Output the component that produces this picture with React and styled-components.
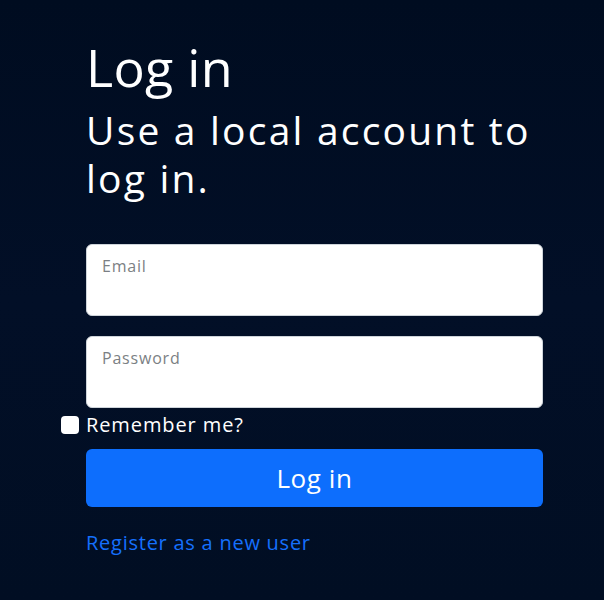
import styled, { createGlobalStyle } from 'styled-components'

const GlobalStyle = createGlobalStyle`
  html, body {
    margin: 0;
    padding: 0;
    background: #010e24;
  }
  body {
    font-family: "Open Sans", "Noto Sans", sans-serif;
    color: #ffffff;
  }
`

const Page = styled.div`
  min-height: 600px;
  background: linear-gradient(180deg, #000c20 0%, #020f27 50%, #010e23 100%);
  padding: 36px 0 0 86px;
  box-sizing: border-box;
`

const Column = styled.div`
  width: 457px;
  display: flex;
  flex-direction: column;
`

const Title = styled.h1`
  margin: 0;
  font-weight: 400;
  font-size: 52px;
  line-height: 62px;
  letter-spacing: 0.3px;
`

const SubTitle = styled.h2`
  margin: 8px 0 0;
  font-weight: 400;
  font-size: 39px;
  line-height: 48px;
  letter-spacing: 2.2px;
`

const Form = styled.form`
  margin-top: 42px;
  display: flex;
  flex-direction: column;
`

const Field = styled.label`
  display: block;
  position: relative;
  height: 72px;
  box-sizing: border-box;
  background: #ffffff;
  border: 1px solid #ced4da;
  border-radius: 6px;
  margin-bottom: ${({ last }) => (last ? '7px' : '20px')};
`

const FloatLabel = styled.span`
  position: absolute;
  left: 15px;
  top: 10px;
  font-size: 16px;
  line-height: 22px;
  letter-spacing: 0.8px;
  color: #7b7f84;
`

const Input = styled.input`
  position: absolute;
  left: 16px;
  right: 16px;
  bottom: 10px;
  border: 0;
  outline: none;
  background: transparent;
  font-family: inherit;
  font-size: 16px;
`

const CheckRow = styled.div`
  display: flex;
  align-items: center;
  gap: 7px;
  margin-left: -25px;
  height: 20px;
`

const Box = styled.span`
  width: 18px;
  height: 18px;
  box-sizing: border-box;
  background: #ffffff;
  border-radius: 4px;
  flex-shrink: 0;
`

const CheckText = styled.span`
  font-size: 20px;
  line-height: 20px;
  letter-spacing: 0.9px;
  color: #ffffff;
`

const Button = styled.button`
  margin-top: 14px;
  height: 58px;
  border: 0;
  border-radius: 6px;
  background: #0d6efd;
  color: #ffffff;
  font-family: inherit;
  font-size: 26px;
  letter-spacing: 0.6px;
  cursor: pointer;
`

const RegisterLink = styled.a`
  margin-top: 23px;
  font-size: 20px;
  line-height: 26px;
  letter-spacing: 0.75px;
  color: #1570fd;
  text-decoration: none;
`

export default function App() {
  return (
    <>
      <GlobalStyle />
      <Page>
        <Column>
          <Title>Log in</Title>
          <SubTitle>Use a local account to log in.</SubTitle>
          <Form onSubmit={(e) => e.preventDefault()}>
            <Field>
              <FloatLabel>Email</FloatLabel>
              <Input type="email" />
            </Field>
            <Field last>
              <FloatLabel>Password</FloatLabel>
              <Input type="password" />
            </Field>
            <CheckRow>
              <Box />
              <CheckText>Remember me?</CheckText>
            </CheckRow>
            <Button type="submit">Log in</Button>
            <RegisterLink href="#">Register as a new user</RegisterLink>
          </Form>
        </Column>
      </Page>
    </>
  )
}
